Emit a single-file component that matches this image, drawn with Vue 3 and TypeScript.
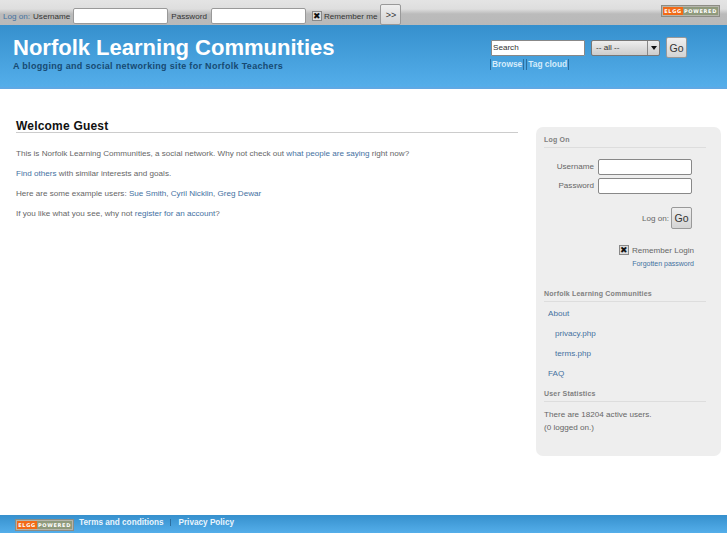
<script setup lang="ts">
const examples = ["Sue Smith", "Cyril Nicklin", "Greg Dewar"];
</script>

<template>
  <div class="page">
    <div class="toolbar">
      <form class="toolbar__login" @submit.prevent>
        <a class="toolbar__logon">Log on:</a>
        <label>Username</label>
        <input class="toolbar__input" type="text" />
        <label class="toolbar__password">Password</label>
        <input class="toolbar__input" type="text" />
        <span class="check"></span>
        <label class="toolbar__remember">Remember me</label>
        <button class="btn btn--small">&gt;&gt;</button>
      </form>
      <span class="elgg-badge elgg-badge--top"><b>ELGG</b><i>POWERED</i></span>
    </div>

    <header class="header">
      <div class="header__brand">
        <h1>Norfolk Learning Communities</h1>
        <p>A blogging and social networking site for Norfolk Teachers</p>
      </div>
      <div class="header__search">
        <div class="header__search-row">
          <input class="search-input" type="text" value="Search" />
          <span class="select">
            <span class="select__label">-- all --</span>
            <span class="select__arrow"></span>
          </span>
          <button class="btn btn--go">Go</button>
        </div>
        <div class="header__links">
          <a>Browse</a>
          <a>Tag cloud</a>
        </div>
      </div>
    </header>

    <main class="main">
      <section class="content">
        <h2>Welcome Guest</h2>
        <p>This is Norfolk Learning Communities, a social network. Why not check out <a>what people are saying</a> right now?</p>
        <p><a>Find others</a> with similar interests and goals.</p>
        <p>
          Here are some example users:
          <template v-for="(name, i) in examples" :key="name"><a>{{ name }}</a><span v-if="i < examples.length - 1">, </span></template>
        </p>
        <p>If you like what you see, why not <a>register for an account</a>?</p>
      </section>

      <aside class="sidebar">
        <h3>Log On</h3>
        <form class="logon" @submit.prevent>
          <div class="logon__row">
            <label>Username</label>
            <input type="text" />
          </div>
          <div class="logon__row">
            <label>Password</label>
            <input type="text" />
          </div>
          <div class="logon__submit">
            <label>Log on:</label>
            <button class="btn btn--go">Go</button>
          </div>
          <div class="logon__remember">
            <span class="check"></span>
            <label>Remember Login</label>
          </div>
          <a class="logon__forgot">Forgotten password</a>
        </form>

        <h3 class="sidebar__heading-site">Norfolk Learning Communities</h3>
        <ul class="menu">
          <li><a>About</a></li>
          <li class="menu__sub"><a>privacy.php</a></li>
          <li class="menu__sub"><a>terms.php</a></li>
          <li><a>FAQ</a></li>
        </ul>

        <h3 class="sidebar__heading-stats">User Statistics</h3>
        <div class="stats">
          <p>There are 18204 active users.</p>
          <p>(0 logged on.)</p>
        </div>
      </aside>
    </main>

    <footer class="footer">
      <span class="elgg-badge"><b>ELGG</b><i>POWERED</i></span>
      <a>Terms and conditions</a>
      <span class="footer__sep"></span>
      <a>Privacy Policy</a>
    </footer>
  </div>
</template>

<style>
html,
body {
  margin: 0;
  background: #fff;
  overflow: hidden;
}
</style>

<style scoped>
.page {
  display: flex;
  flex-direction: column;
  height: 545px;
  font-family: "Liberation Sans", Arial, sans-serif;
  font-size: 8.1px;
  color: #666;
}

a {
  color: #44719f;
}

/* top bar */
.toolbar {
  display: flex;
  align-items: flex-start;
  justify-content: space-between;
  box-sizing: border-box;
  height: 25px;
  padding: 4px 7px 0 3px;
  background: linear-gradient(#e4e4e4 0, #dedede 9px, #bbb 14px, #b9b9b9 100%);
}

.toolbar__login {
  display: flex;
  align-items: center;
  height: 24px;
  color: #333;
}

.toolbar__logon {
  margin-right: 3px;
}

.toolbar__input {
  box-sizing: border-box;
  width: 95px;
  height: 16px;
  margin: 0 3px;
  padding: 0;
  border: 1px solid #999;
  border-radius: 2px;
  background: #fff;
}

.toolbar__password {
  margin-right: 1px;
}

.toolbar .check {
  margin-left: 3px;
}

.toolbar__remember {
  margin: 0 3px 0 2px;
}

.check {
  position: relative;
  display: inline-block;
  box-sizing: border-box;
  width: 10px;
  height: 10px;
  border: 1px solid #888;
  background: #ddd;
}

.check::before {
  content: "\2716";
  position: absolute;
  left: 0;
  top: -1px;
  font: 9px/10px "DejaVu Sans", sans-serif;
  color: #111;
}

.btn {
  box-sizing: border-box;
  padding: 0;
  border: 1px solid #999;
  border-radius: 2px;
  background: linear-gradient(#efefef, #d4d4d4);
  font-family: "Liberation Sans", Arial, sans-serif;
  color: #333;
}

.btn--small {
  align-self: flex-start;
  width: 21px;
  height: 21px;
  font-size: 9px;
}

.btn--go {
  width: 21px;
  height: 21px;
  font-size: 10.5px;
}

.elgg-badge {
  display: inline-flex;
  box-sizing: border-box;
  width: 59px;
  height: 12px;
  padding: 1px;
  border: 1px solid #8c8c84;
  background: #b5b5ac;
  font: bold 5px/8px "DejaVu Sans", sans-serif;
  letter-spacing: 0.7px;
  color: #fff;
}

.elgg-badge--top {
  margin-top: 1px;
}

.elgg-badge b {
  width: 20px;
  text-align: center;
  background: #f26a16;
}

.elgg-badge i {
  flex: 1;
  font-style: normal;
  text-align: center;
  background: #8f9a7c;
}

/* header */
.header {
  display: flex;
  justify-content: space-between;
  box-sizing: border-box;
  height: 64px;
  border-bottom: 2px solid #5fa8e4;
  background: linear-gradient(#3690cd, #54aeea);
  color: #fff;
}

.header__brand {
  padding: 9px 0 0 13px;
}

.header__brand h1 {
  margin: 0;
  font-size: 22px;
  line-height: 28px;
  font-weight: bold;
}

.header__brand p {
  margin: 0;
  font-size: 9px;
  line-height: 9px;
  font-weight: bold;
  letter-spacing: 0.32px;
  color: #174a72;
}

.header__search {
  width: 236px;
  padding-top: 12px;
}

.header__search-row {
  display: flex;
  align-items: center;
}

.search-input {
  box-sizing: border-box;
  width: 94px;
  height: 16px;
  padding: 0 1px;
  border: 1px solid #888;
  border-radius: 1px;
  font: 8.1px "Liberation Sans", Arial, sans-serif;
  color: #333;
}

.select {
  display: flex;
  box-sizing: border-box;
  width: 69px;
  height: 16px;
  margin: 0 6px;
  border: 1px solid #777;
  border-radius: 2px;
  background: linear-gradient(#eee, #ccc);
  color: #333;
}

.select__label {
  flex: 1;
  padding-left: 4px;
  line-height: 14px;
}

.select__arrow {
  position: relative;
  width: 11px;
  border-left: 1px solid #888;
}

.select__arrow::after {
  content: "";
  position: absolute;
  left: 3px;
  top: 5px;
  border: 3px solid transparent;
  border-top: 4px solid #111;
  border-bottom: 0;
}

.header__links {
  display: flex;
  gap: 2px;
  margin: 1px 0 0 -1px;
  font-size: 8.4px;
  line-height: 11px;
  font-weight: bold;
}

.header__links a {
  padding: 0 1px;
  border-left: 1px solid #2d6f9f;
  border-right: 1px solid #2d6f9f;
  color: #d6ecfb;
}

/* main area */
.main {
  flex: 1;
  display: flex;
  align-items: flex-start;
  justify-content: space-between;
  min-height: 0;
  padding: 30px 0 0 16px;
}

.content {
  width: 502px;
}

.content h2 {
  height: 13px;
  margin: 0 0 15px;
  border-bottom: 1px solid #ccc;
  font-size: 12px;
  line-height: 15px;
  font-weight: bold;
  letter-spacing: 0.2px;
  color: #111;
}

.content p {
  margin: 0 0 9px;
  line-height: 11px;
}

.sidebar {
  box-sizing: border-box;
  width: 185px;
  height: 329px;
  margin: 8px 6px 0 0;
  padding: 8px 15px 0 8px;
  border-radius: 7px;
  background: #eee;
}

.sidebar h3 {
  margin: 0;
  padding-bottom: 3px;
  border-bottom: 1px solid #ddd;
  font-size: 7px;
  line-height: 9px;
  font-weight: bold;
  letter-spacing: 0.2px;
  color: #808080;
}

.sidebar .sidebar__heading-site {
  margin-top: 21px;
}

.sidebar .sidebar__heading-stats {
  margin-top: 7px;
}

.logon {
  display: flex;
  flex-direction: column;
  align-items: flex-end;
  padding: 11px 14px 0 0;
}

.logon__row {
  display: flex;
  align-items: center;
  gap: 4px;
  margin-bottom: 3px;
}

.logon__row label {
  padding-bottom: 2px;
}

.logon__row input {
  box-sizing: border-box;
  width: 94px;
  height: 16px;
  padding: 0;
  border: 1px solid #888;
  border-radius: 2px;
  background: #fff;
}

.logon__submit {
  display: flex;
  align-items: center;
  gap: 2px;
  margin-top: 10px;
}

.logon__submit .btn--go {
  height: 22px;
}

.logon__remember {
  display: flex;
  align-items: center;
  gap: 3px;
  margin: 16px -2px 0 0;
}

.logon__forgot {
  margin: 4px -2px 0 0;
  font-size: 7px;
  line-height: 9px;
}

.menu {
  margin: 0;
  padding: 0;
  list-style: none;
}

.menu li {
  padding: 4px 0 0 4px;
  height: 16px;
  line-height: 16px;
}

.menu .menu__sub {
  padding-left: 11px;
}

.stats {
  padding-top: 7px;
}

.stats p {
  margin: 0 0 2px;
  line-height: 11px;
}

/* footer */
.footer {
  display: flex;
  align-items: flex-start;
  box-sizing: border-box;
  height: 18px;
  margin-bottom: 12px;
  padding: 2px 0 0 15px;
  background: linear-gradient(#3690cd, #54aeea);
  font-size: 8.2px;
  line-height: 11px;
  font-weight: bold;
}

.footer .elgg-badge {
  margin: 2px 5px 0 0;
}

.footer a {
  color: #eaf5fd;
}

.footer__sep {
  width: 1px;
  height: 7px;
  margin: 2px 7px 0;
  background: #2d6f9f;
}
</style>
